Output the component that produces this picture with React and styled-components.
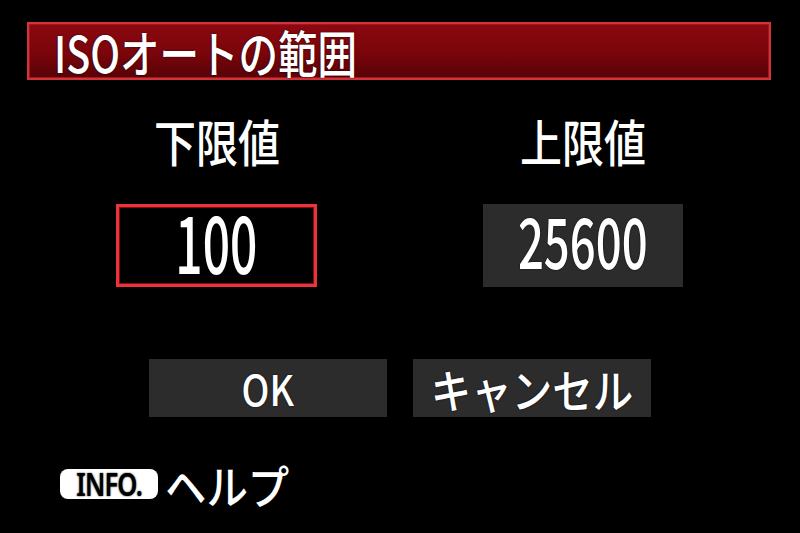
import React from "react";
import styled, { createGlobalStyle } from "styled-components";

const Global = createGlobalStyle`
  html, body { margin: 0; padding: 0; background: #000; }
  body { width: 800px; height: 533px; overflow: hidden; }
  #root { width: 800px; height: 533px; }
`;

const Screen = styled.div`
  width: 800px;
  height: 533px;
  background: #000;
  color: #fff;
  font-family: "Noto Sans CJK JP", "Noto Sans", sans-serif;
  font-weight: 500;
  display: flex;
  flex-direction: column;
  box-sizing: border-box;
  padding-top: 22px;
`;

const TitleBar = styled.div`
  margin-left: 27px;
  width: 744px;
  height: 58px;
  box-sizing: border-box;
  border: 2px solid #d6323a;
  box-shadow: inset 0 0 0 1px #9a1a20;
  background: linear-gradient(180deg, #8c0810 0%, #7a050b 55%, #560307 100%);
  display: flex;
  align-items: center;
  padding-left: 25px;
`;

const Squeeze = styled.span`
  display: inline-block;
  white-space: nowrap;
  transform: scaleX(${(p) => p.$sx || 1});
  transform-origin: ${(p) => p.$origin || "center"} center;
  text-shadow: 0 0 2px rgba(0, 0, 0, 0.9);
`;

const TitleText = styled.div`
  font-size: 50px;
  font-weight: 500;
  line-height: 1;
`;

const Grid = styled.div`
  display: grid;
  grid-template-columns: 201px 200px;
  column-gap: 166px;
  padding-left: 116px;
`;

const Label = styled.div`
  font-size: 50px;
  line-height: 50px;
  height: 50px;
  text-align: center;
  margin-top: ${(p) => p.$mt}px;
`;

const ValueBox = styled.div`
  height: 83px;
  box-sizing: border-box;
  margin-top: 39px;
  padding-bottom: 14px;
  display: flex;
  align-items: center;
  justify-content: center;
  background: ${(p) => (p.$active ? "#000" : "#2c2c2c")};
  border: 3px solid ${(p) => (p.$active ? "#ec333c" : "#2c2c2c")};
  box-shadow: ${(p) => (p.$active ? "inset 0 0 0 1px #7a1015" : "none")};
`;

const Digits = styled.div`
  font-size: ${(p) => p.$size}px;
  line-height: 1;
`;

const ButtonRow = styled.div`
  display: flex;
  gap: 26px;
  margin-top: 72px;
  padding-left: 149px;
`;

const Button = styled.div`
  width: 238px;
  height: 58px;
  background: #2c2c2c;
  display: flex;
  align-items: center;
  justify-content: center;
  font-size: ${(p) => p.$size}px;
  line-height: 1;
`;

const HelpRow = styled.div`
  display: flex;
  align-items: center;
  margin-top: 42px;
  padding-left: 60px;
  gap: 7px;
  height: 50px;
`;

const InfoBadge = styled.div`
  width: 98px;
  height: 30px;
  border-radius: 8px;
  background: #fff;
  color: #000;
  display: flex;
  align-items: center;
  justify-content: center;
  font-family: "Noto Sans", "Liberation Sans", sans-serif;
  font-weight: 600;
  font-size: 32px;
  line-height: 1;
  letter-spacing: -1px;
`;

const HelpText = styled.div`
  font-size: 46px;
  line-height: 1;
`;

export default function App() {
  return (
    <>
      <Global />
      <Screen>
        <TitleBar>
          <TitleText>
            <Squeeze $sx={0.79} $origin="left">ISOオートの範囲</Squeeze>
          </TitleText>
        </TitleBar>
        <Grid>
          <Label $mt={35}>
            <Squeeze $sx={0.84}>下限値</Squeeze>
          </Label>
          <Label $mt={35}>
            <Squeeze $sx={0.84}>上限値</Squeeze>
          </Label>
          <ValueBox $active>
            <Digits $size={80}>
              <Squeeze $sx={0.6}>100</Squeeze>
            </Digits>
          </ValueBox>
          <ValueBox>
            <Digits $size={70}>
              <Squeeze $sx={0.65}>25600</Squeeze>
            </Digits>
          </ValueBox>
        </Grid>
        <ButtonRow>
          <Button $size={42}>
            <Squeeze $sx={0.88}>OK</Squeeze>
          </Button>
          <Button $size={46}>
            <Squeeze $sx={0.88}>キャンセル</Squeeze>
          </Button>
        </ButtonRow>
        <HelpRow>
          <InfoBadge>
            <Squeeze $sx={0.8}>INFO.</Squeeze>
          </InfoBadge>
          <HelpText>
            <Squeeze $sx={0.9} $origin="left">ヘルプ</Squeeze>
          </HelpText>
        </HelpRow>
      </Screen>
    </>
  );
}
